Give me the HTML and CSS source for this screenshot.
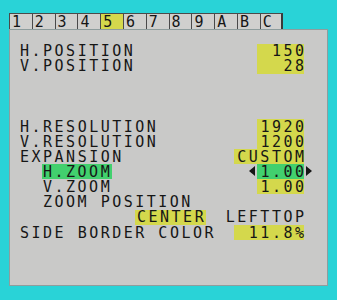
FILE: index.html
```html
<!DOCTYPE html>
<html lang="en">
<head>
    <meta charset="UTF-8">
    <title>OSD Menu</title>
    <link rel="stylesheet" href="styles.css">
</head>
<body>
    <div class="tabs">
        <div class="tab">1</div>
        <div class="tab">2</div>
        <div class="tab">3</div>
        <div class="tab">4</div>
        <div class="tab active">5</div>
        <div class="tab">6</div>
        <div class="tab">7</div>
        <div class="tab">8</div>
        <div class="tab">9</div>
        <div class="tab">A</div>
        <div class="tab">B</div>
        <div class="tab last">C</div>
    </div>

    <div class="panel">
        <div class="row">
            <span class="lbl">H.POSITION</span>
            <span class="val hl w4"><i>150</i></span>
        </div>
        <div class="row">
            <span class="lbl">V.POSITION</span>
            <span class="val hl w4"><i>28</i></span>
        </div>

        <div class="gap"></div>

        <div class="row">
            <span class="lbl">H.RESOLUTION</span>
            <span class="val hl w4"><i>1920</i></span>
        </div>
        <div class="row">
            <span class="lbl">V.RESOLUTION</span>
            <span class="val hl w4"><i>1200</i></span>
        </div>
        <div class="row">
            <span class="lbl">EXPANSION</span>
            <span class="val hl w6"><i>CUSTOM</i></span>
        </div>
        <div class="row">
            <span class="lbl sub sel">H.ZOOM</span>
            <span class="val sel w4 arrows"><i>1.00</i></span>
        </div>
        <div class="row">
            <span class="lbl sub">V.ZOOM</span>
            <span class="val hl w4"><i>1.00</i></span>
        </div>
        <div class="row">
            <span class="lbl sub">ZOOM POSITION</span>
        </div>
        <div class="row">
            <span class="opt hl"><i>CENTER</i></span>
            <span class="val"><i>LEFTTOP</i></span>
        </div>
        <div class="row">
            <span class="lbl">SIDE BORDER COLOR</span>
            <span class="val hl w6"><i>11.8%</i></span>
        </div>
    </div>
</body>
</html>
```

FILE: styles.css
```css
body {
    margin: 0;
    background-color: #29d3d7;
    font-family: "DejaVu Sans Mono", monospace;
    font-size: 15px;
    letter-spacing: 2.5px;
    color: #161616;
}

i {
    font-style: normal;
}

/* tab strip */
.tabs {
    display: flex;
    padding: 13px 0 0 9px;
}

.tab {
    box-sizing: border-box;
    width: 22.8px;
    height: 16px;
    padding-left: 2px;
    line-height: 16px;
    background-color: #d0d0ce;
    border-top: 1px solid #4a4a4a;
    border-left: 1px solid #4a4a4a;
    letter-spacing: 0;
}

.tab.active {
    background-color: #d4d84c;
}

.tab.last {
    border-right: 2px solid #3a3a3a;
}

/* main panel */
.panel {
    box-sizing: border-box;
    width: 319px;
    height: 257px;
    margin-left: 9px;
    padding: 13.5px 23px 0 10px;
    background-color: #c9c9c8;
    border: 1px solid #8e9d9d;
}

.row {
    display: flex;
    justify-content: space-between;
    height: 15.1px;
    line-height: 15.1px;
}

.row > span {
    box-sizing: border-box;
    padding-top: 0.9px;
    line-height: 14.2px;
}

.gap {
    height: 45.3px;
}

.sub {
    margin-left: 23px;
}

.lbl.sel {
    padding-left: 1px;
    margin-left: 22px;
}

.val {
    margin-left: auto;
    text-align: right;
}

.val i,
.opt i {
    margin-right: -2.5px;
}

.w4 {
    min-width: 47px;
}

.w6 {
    min-width: 70px;
}

.hl {
    background-color: #d4d84c;
}

.sel {
    background-color: #42d06e;
}

.row > .opt {
    margin-left: 115px;
    padding-left: 2px;
    padding-right: 2px;
}

/* little pointers either side of the selected value */
.arrows {
    position: relative;
}

.arrows::before,
.arrows::after {
    content: "";
    position: absolute;
    top: 2px;
    border-top: 5.5px solid transparent;
    border-bottom: 5.5px solid transparent;
}

.arrows::before {
    left: -8px;
    border-right: 6px solid #161616;
}

.arrows::after {
    right: -8px;
    border-left: 6px solid #161616;
}
```
